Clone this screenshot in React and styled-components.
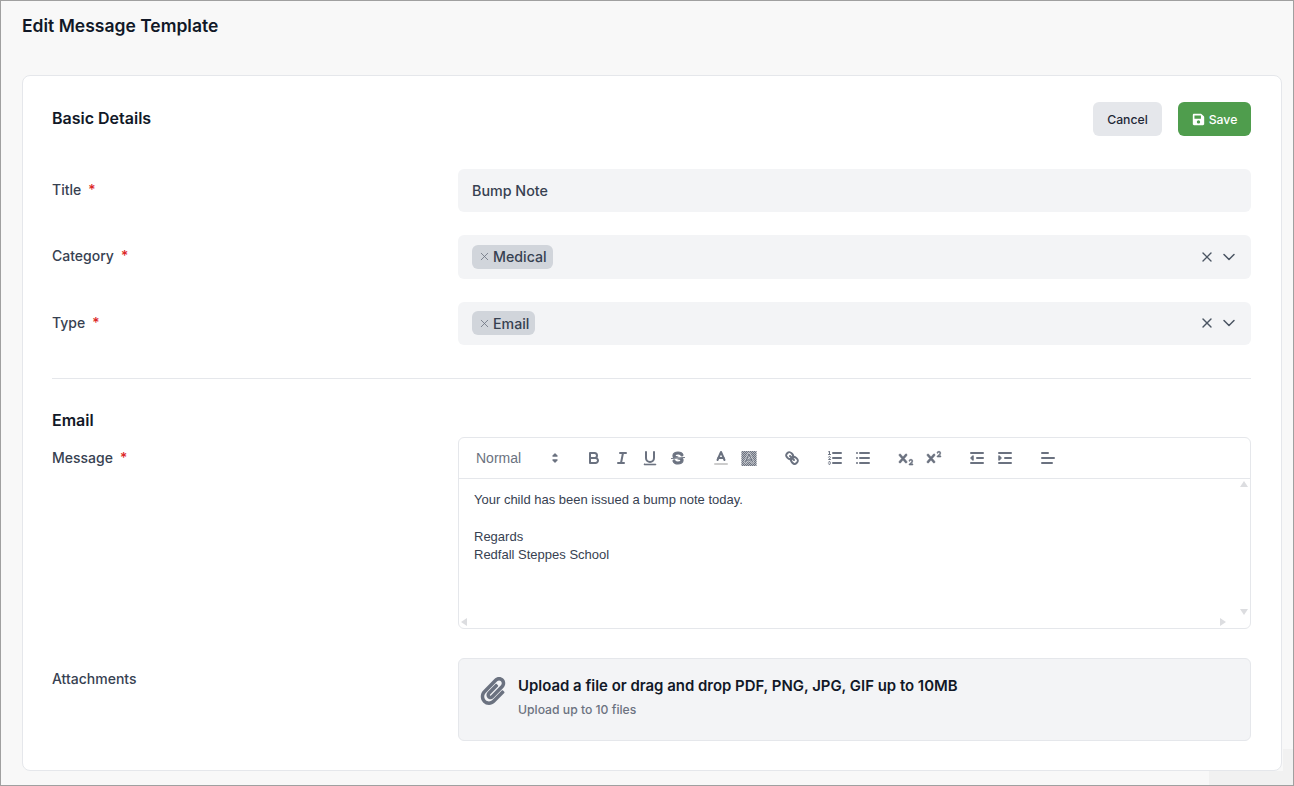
import React from 'react'
import styled, { createGlobalStyle } from 'styled-components'
import { X, ChevronDown } from 'lucide-react'
import { FaSave, FaPaperclip } from 'react-icons/fa'

const GlobalStyle = createGlobalStyle`
  html, body { margin: 0; padding: 0; background: #f8f8f8; }
  body { font-family: "Inter", "Liberation Sans", sans-serif; }
  * { box-sizing: border-box; }
`

const Page = styled.div`
  width: 1294px;
  height: 786px;
  border: 1px solid #a0a0a0;
  background:
    linear-gradient(#f1f1f1, #f1f1f1) right bottom / 84px 14px no-repeat,
    linear-gradient(#f1f1f1, #f1f1f1) right bottom / 10px 36px no-repeat,
    #f8f8f8;
  padding: 0 11px 0 21px;
  overflow: hidden;
`

const PageTitle = styled.h1`
  margin: 0;
  height: 74px;
  padding-top: 14px;
  font-size: 17.5px;
  line-height: 22px;
  font-weight: 600;
  color: #111827;
`

const Card = styled.div`
  height: 696px;
  background: #fff;
  border: 1px solid #e5e7eb;
  border-radius: 8px;
  padding: 26px 30px 0 29px;
`

const HeaderRow = styled.div`
  display: flex;
  align-items: center;
  justify-content: space-between;
  height: 34px;
  margin-bottom: 33px;
`

const SectionTitle = styled.h2`
  margin: -1px 0 1px;
  font-size: 16px;
  line-height: 24px;
  font-weight: 600;
  color: #111827;
`

const Actions = styled.div`
  display: flex;
  gap: 16px;
`

const Button = styled.button`
  display: inline-flex;
  align-items: center;
  justify-content: center;
  gap: 4px;
  width: ${p => (p.$primary ? '73px' : '69px')};
  height: 34px;
  padding: 0;
  border: 0;
  border-radius: 6px;
  font-family: inherit;
  font-size: 12.25px;
  font-weight: 500;
  background: ${p => (p.$primary ? '#4f9d4d' : '#e5e7eb')};
  color: ${p => (p.$primary ? '#fff' : '#1f2937')};
`

const FormRow = styled.div`
  display: grid;
  grid-template-columns: 406px 793px;
  height: ${p => p.$height || 43}px;
  margin-bottom: ${p => p.$gap || 0}px;
`

const Label = styled.label`
  font-size: 14px;
  line-height: 20px;
  font-weight: 500;
  color: #374151;
  padding-top: 11px;
`

const Required = styled.span`
  color: #dc2626;
  margin-left: 7px;
`

const TextInput = styled.div`
  display: flex;
  align-items: center;
  padding: 0 14px;
  background: #f3f4f6;
  border-radius: 6px;
  font-size: 14.3px;
  font-weight: 500;
  color: #374151;
`

const SelectBox = styled(TextInput)`
  justify-content: space-between;
  padding-right: 12px;
  padding-bottom: 1px;
`

const Tag = styled.span`
  display: inline-flex;
  align-items: center;
  height: 24px;
  padding: 0 6px;
  gap: 2px;
  border-radius: 6px;
  background: #d1d5db;
  font-size: 14.2px;
  font-weight: 500;
  color: #374151;
`

const SelectIcons = styled.span`
  display: flex;
  align-items: center;
  gap: 4px;
  color: #4b5563;
`

const Divider = styled.hr`
  margin: 33px 0 30px;
  border: 0;
  border-top: 1px solid #e5e7eb;
`

const SubTitle = styled(SectionTitle)`
  margin: -1px 0 5px;
`

const Editor = styled.div`
  display: flex;
  flex-direction: column;
  border: 1px solid #e5e7eb;
  border-radius: 6px;
  overflow: hidden;
`

const Toolbar = styled.div`
  display: flex;
  height: 41px;
  padding: 8px;
  border-bottom: 1px solid #e5e7eb;
`

const ToolGroup = styled.span`
  display: flex;
  margin-right: 15px;
`

const Picker = styled.span`
  display: flex;
  align-items: center;
  justify-content: space-between;
  width: 98px;
  height: 24px;
  padding: 0 0 0 9px;
  font-family: "Liberation Sans", Arial, sans-serif;
  font-size: 14px;
  color: #6b7280;
`

const ToolSvg = styled.svg`
  display: block;
  width: 18px;
  height: 18px;
  fill: none;
  stroke: #6b7280;
  stroke-width: 2;
  stroke-linecap: round;
  stroke-linejoin: round;
`

const ToolBtn = styled.span`
  display: flex;
  align-items: center;
  justify-content: center;
  width: ${p => p.$width || 28}px;
  height: 24px;
`

const Thin = styled.path`
  stroke-width: 1;
`

const Solid = styled.path`
  fill: #6b7280;
  stroke: #6b7280;
  stroke-width: ${p => p.$weight ?? 0.6};
`

const Halo = styled.path`
  stroke: #fff;
  stroke-width: 3.5;
  opacity: 0.35;
`

const EditorBody = styled.div`
  flex: 1;
  display: grid;
  grid-template-columns: 1fr 12px;
  grid-template-rows: 1fr 12px;
  min-height: 0;
`

const EditorText = styled.div`
  padding: 12px 15px;
  font-family: "Liberation Sans", Helvetica, Arial, sans-serif;
  font-size: 13px;
  line-height: 18.46px;
  color: #374151;
`

const Para = styled.p`
  margin: 0;
  min-height: 18.46px;
`

const VBar = styled.div`
  display: flex;
  flex-direction: column;
  align-items: center;
  justify-content: space-between;
  padding-top: 1px;
`

const HBar = styled.div`
  display: flex;
  align-items: center;
  justify-content: space-between;
  padding: 0 11px 0 1px;
`

const Arrow = styled.svg`
  display: block;
  width: 8px;
  height: 8px;
  fill: #dcdde0;
`

const Dropzone = styled.div`
  display: flex;
  align-items: center;
  gap: 11px;
  padding: 0 22px 6px 20px;
  background: #f3f4f6;
  border: 1px solid #e5e7eb;
  border-radius: 6px;
  color: #6b7280;
`

const ClipIcon = styled(FaPaperclip)`
  margin-bottom: 12px;
`

const DropText = styled.div`
  display: flex;
  flex-direction: column;
  gap: 6px;
`

const DropTitle = styled.div`
  font-size: 14.93px;
  line-height: 20px;
  font-weight: 600;
  color: #111827;
`

const DropHint = styled.div`
  font-size: 12.2px;
  line-height: 16px;
  font-weight: 500;
  color: #6b7280;
`

const Bar = ({ y, x1 = 3, x2 = 15 }) => <line x1={x1} x2={x2} y1={y} y2={y} />

const Icon = ({ children }) => (
  <ToolBtn>
    <ToolSvg viewBox="0 0 18 18">{children}</ToolSvg>
  </ToolBtn>
)

const toolbar = [
  [
    <><path d="M5,4H9.5A2.5,2.5,0,0,1,12,6.5v0A2.5,2.5,0,0,1,9.5,9H5A0,0,0,0,1,5,9V4A0,0,0,0,1,5,4Z" /><path d="M5,9h5.5A2.5,2.5,0,0,1,13,11.5v0A2.5,2.5,0,0,1,10.5,14H5a0,0,0,0,1,0,0V9A0,0,0,0,1,5,9Z" /></>,
    <><line x1="7" x2="13" y1="4" y2="4" /><line x1="5" x2="11" y1="14" y2="14" /><line x1="8" x2="10" y1="14" y2="4" /></>,
    <><path d="M5,3V9a4.012,4.012,0,0,0,4,4H9a4.012,4.012,0,0,0,4-4V3" /><Solid as="rect" width="12" height="1" rx="0.5" x="3" y="15" /></>,
    <><Thin d="M15.5,8.5 2.5,9.5" /><Solid $weight={1.2} d="M9.007,8C6.542,7.791,6,7.519,6,6.5,6,5.792,7.283,5,9,5c1.571,0,2.765.679,2.969,1.309a1,1,0,0,0,1.9-.617C13.356,4.106,11.354,3,9,3,6.2,3,4,4.538,4,6.5a3.2,3.2,0,0,0,.5,1.843Z" /><Solid $weight={1.2} d="M8.984,10C11.457,10.208,12,10.479,12,11.5c0,.708-1.283,1.5-3,1.5-1.571,0-2.765-.679-2.969-1.309a1,1,0,1,0-1.9.617C4.644,13.894,6.646,15,9,15c2.8,0,5-1.538,5-3.5a3.2,3.2,0,0,0-.5-1.843Z" /></>,
  ],
  [
    <><line x1="3" x2="15" y1="15" y2="15" stroke="#ccc" /><polyline points="5.5 11 9 3 12.5 11" /><line x1="11.63" x2="6.38" y1="9" y2="9" /></>,
    <>
      <defs>
        <pattern id="dither" width="2" height="2" patternUnits="userSpaceOnUse">
          <Solid as="rect" $weight={0} width="1" height="1" />
          <Solid as="rect" $weight={0} x="1" y="1" width="1" height="1" />
        </pattern>
      </defs>
      <rect x="1.5" y="2" width="15" height="15" fill="#b4b7bd" stroke="none" />
      <rect x="1.5" y="2" width="15" height="15" fill="url(#dither)" stroke="none" />
      <Halo d="M5.5 13 9 5 12.5 13M11.63 11H6.38" />
      <Thin d="M5.5 13 9 5 12.5 13M11.63 11H6.38" />
    </>,
  ],
  [
    <><line x1="7" x2="11" y1="7" y2="11" /><path d="M8.9,4.577a3.476,3.476,0,0,1,.36,4.679A3.476,3.476,0,0,1,4.577,8.9C3.185,7.5,2.035,6.4,4.217,4.217S7.5,3.185,8.9,4.577Z" /><path d="M13.423,9.1a3.476,3.476,0,0,0-4.679-.36,3.476,3.476,0,0,0,.36,4.679c1.392,1.392,2.5,2.542,4.679.36S14.815,10.5,13.423,9.1Z" /></>,
  ],
  [
    <><Bar y="4" x1="7" /><Bar y="9" x1="7" /><Bar y="14" x1="7" /><Thin d="M2.5,5.5h2" /><Solid $weight={0} d="M3.5,6A0.5,0.5,0,0,1,3,5.5V3.085l-0.276.138A0.5,0.5,0,0,1,2.053,3c-0.124-.247-0.023-0.324.224-0.447l1-.5A0.5,0.5,0,0,1,4,2.5v3A0.5,0.5,0,0,1,3.5,6Z" /><Thin d="M4.5,10.5h-2c0-.234,1.85-1.076,1.85-2.234A0.959,0.959,0,0,0,2.5,8.156" /><Thin d="M2.5,14.846a0.959,0.959,0,0,0,1.85-.109A0.7,0.7,0,0,0,3.75,14a0.688,0.688,0,0,0,.6-0.736,0.959,0.959,0,0,0-1.85-.109" /></>,
    <><Bar y="4" x1="6" /><Bar y="9" x1="6" /><Bar y="14" x1="6" /><Bar y="4" x2="3" /><Bar y="9" x2="3" /><Bar y="14" x2="3" /></>,
  ],
  [
    <><Solid d="M15.5,15H13.861a3.858,3.858,0,0,0,1.914-2.975,1.8,1.8,0,0,0-1.6-1.751A1.921,1.921,0,0,0,12.021,11.7a0.50013,0.50013,0,1,0,.957.291h0a0.914,0.914,0,0,1,1.053-.725,0.81,0.81,0,0,1,.744.762c0,1.076-1.16971,1.86982-1.93971,2.43082A1.45639,1.45639,0,0,0,12,15.5a0.5,0.5,0,0,0,.5.5h3A0.5,0.5,0,0,0,15.5,15Z" /><Solid d="M9.65,5.241a1,1,0,0,0-1.409.108L6,7.964,3.759,5.349A1,1,0,0,0,2.192,6.59178Q2.21541,6.6213,2.241,6.649L4.684,9.5,2.241,12.35A1,1,0,0,0,3.71,13.70722q0.02557-.02768.049-0.05722L6,11.036,8.241,13.65a1,1,0,1,0,1.567-1.24277Q9.78459,12.3777,9.759,12.35L7.316,9.5,9.759,6.651A1,1,0,0,0,9.65,5.241Z" /></>,
    <><Solid d="M15.5,7H13.861a4.015,4.015,0,0,0,1.914-2.975,1.8,1.8,0,0,0-1.6-1.751A1.922,1.922,0,0,0,12.021,3.7a0.5,0.5,0,1,0,.957.291,0.917,0.917,0,0,1,1.053-.725,0.81,0.81,0,0,1,.744.762c0,1.077-1.164,1.925-1.934,2.486A1.423,1.423,0,0,0,12,7.5a0.5,0.5,0,0,0,.5.5h3A0.5,0.5,0,0,0,15.5,7Z" /><Solid d="M9.651,5.241a1,1,0,0,0-1.41.108L6,7.964,3.759,5.349a1,1,0,1,0-1.519,1.3L4.683,9.5,2.241,12.35a1,1,0,1,0,1.519,1.3L6,11.036,8.241,13.65a1,1,0,0,0,1.519-1.3L7.317,9.5,9.759,6.651A1,1,0,0,0,9.651,5.241Z" /></>,
  ],
  [
    <><Bar y="14" /><Bar y="4" /><Bar y="9" x1="9" /><path d="M5 7 5 11 3 9 5 7" fill="#6b7280" strokeWidth="1.5" /></>,
    <><Bar y="14" /><Bar y="4" /><Bar y="9" x1="9" /><path d="M3 7 3 11 5 9 3 7" fill="#6b7280" strokeWidth="1.5" /></>,
  ],
  [
    <><Bar y="9" /><Bar y="14" x2="13" /><Bar y="4" x2="9" /></>,
  ],
]

const SelectField = ({ value }) => (
  <SelectBox>
    <Tag>
      <X size={13} strokeWidth={1.5} color="#6b7280" />
      {value}
    </Tag>
    <SelectIcons>
      <X size={16} strokeWidth={2} />
      <ChevronDown size={20} strokeWidth={1.8} />
    </SelectIcons>
  </SelectBox>
)

export default function App() {
  return (
    <>
      <GlobalStyle />
      <Page>
        <PageTitle>Edit Message Template</PageTitle>
        <Card>
          <HeaderRow>
            <SectionTitle>Basic Details</SectionTitle>
            <Actions>
              <Button>Cancel</Button>
              <Button $primary><FaSave size={13} />Save</Button>
            </Actions>
          </HeaderRow>

          <FormRow $gap={23}>
            <Label>Title<Required>*</Required></Label>
            <TextInput>Bump Note</TextInput>
          </FormRow>
          <FormRow $height={44} $gap={23}>
            <Label>Category<Required>*</Required></Label>
            <SelectField value="Medical" />
          </FormRow>
          <FormRow>
            <Label>Type<Required>*</Required></Label>
            <SelectField value="Email" />
          </FormRow>

          <Divider />
          <SubTitle>Email</SubTitle>

          <FormRow $height={192} $gap={29}>
            <Label>Message<Required>*</Required></Label>
            <Editor>
              <Toolbar>
                <ToolGroup>
                  <Picker>
                    Normal
                    <ToolBtn $width={20}>
                      <ToolSvg viewBox="0 0 18 18">
                        <Solid as="polygon" $weight={1.4} points="7 11 9 13 11 11" />
                        <Solid as="polygon" $weight={1.4} points="7 7 9 5 11 7" />
                      </ToolSvg>
                    </ToolBtn>
                  </Picker>
                </ToolGroup>
                {toolbar.map((group, i) => (
                  <ToolGroup key={i}>
                    {group.map((icon, j) => <Icon key={j}>{icon}</Icon>)}
                  </ToolGroup>
                ))}
              </Toolbar>
              <EditorBody>
                <EditorText>
                  <Para>Your child has been issued a bump note today.</Para>
                  <Para />
                  <Para>Regards</Para>
                  <Para>Redfall Steppes School</Para>
                </EditorText>
                <VBar>
                  <Arrow viewBox="0 0 8 8"><polygon points="0,7 4,1 8,7" /></Arrow>
                  <Arrow viewBox="0 0 8 8"><polygon points="0,1 4,7 8,1" /></Arrow>
                </VBar>
                <HBar>
                  <Arrow viewBox="0 0 8 8"><polygon points="7,0 1,4 7,8" /></Arrow>
                  <Arrow viewBox="0 0 8 8"><polygon points="1,0 7,4 1,8" /></Arrow>
                </HBar>
              </EditorBody>
            </Editor>
          </FormRow>

          <FormRow $height={83}>
            <Label>Attachments</Label>
            <Dropzone>
              <ClipIcon size={28} />
              <DropText>
                <DropTitle>Upload a file or drag and drop PDF, PNG, JPG, GIF up to 10MB</DropTitle>
                <DropHint>Upload up to 10 files</DropHint>
              </DropText>
            </Dropzone>
          </FormRow>
        </Card>
      </Page>
    </>
  )
}
